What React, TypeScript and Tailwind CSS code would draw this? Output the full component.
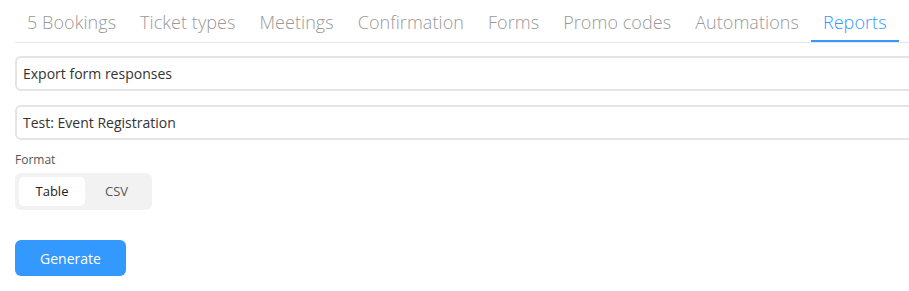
const tabs = [
  "5 Bookings",
  "Ticket types",
  "Meetings",
  "Confirmation",
  "Forms",
  "Promo codes",
  "Automations",
  "Reports",
];

const App = () => {
  return (
    <div className="w-[909px] h-[291px] overflow-hidden bg-white font-['Open_Sans',sans-serif]">
      <div className="pl-[15px] w-[960px]">
        <div className="flex border-b border-[#e6e6e6] h-[43px]">
          {tabs.map((t) => (
            <div
              key={t}
              className={
                t === "Reports"
                  ? "px-3 h-[42px] flex items-center pt-[4px] text-[18px] font-light text-[#3399ff] border-b-2 border-[#3399ff] tracking-[0.06px]"
                  : "px-3 h-[42px] flex items-center pt-[4px] text-[18px] font-light text-[#999999] border-b-2 border-transparent tracking-[0.06px]"
              }
            >
              {t}
            </div>
          ))}
        </div>
        <div className="mt-[13px] h-[35px] border-2 border-[#e4e4e4] rounded-[6px] flex items-center px-[6px] text-[14px] text-[#333333]">
          Export form responses
        </div>
        <div className="mt-[14px] h-[35px] border-2 border-[#e4e4e4] rounded-[6px] flex items-center px-[6px] text-[14px] text-[#333333]">
          Test: Event Registration
        </div>
        <div className="mt-[12px] text-[12px] text-[#555555] leading-[16px]">
          Format
        </div>
        <div className="mt-[5px] w-[137px] h-[37px] bg-[#f2f2f2] rounded-[6px] p-[4px] flex text-[13px]">
          <div className="w-[66px] bg-white rounded-[5px] flex items-center justify-center text-[#222222]">
            Table
          </div>
          <div className="flex-1 flex items-center justify-center text-[#555555]">
            CSV
          </div>
        </div>
        <button className="mt-[30px] w-[111px] h-[36px] bg-[#3399ff] rounded-[6px] text-white text-[14px]">
          Generate
        </button>
      </div>
    </div>
  );
};

export default App;
